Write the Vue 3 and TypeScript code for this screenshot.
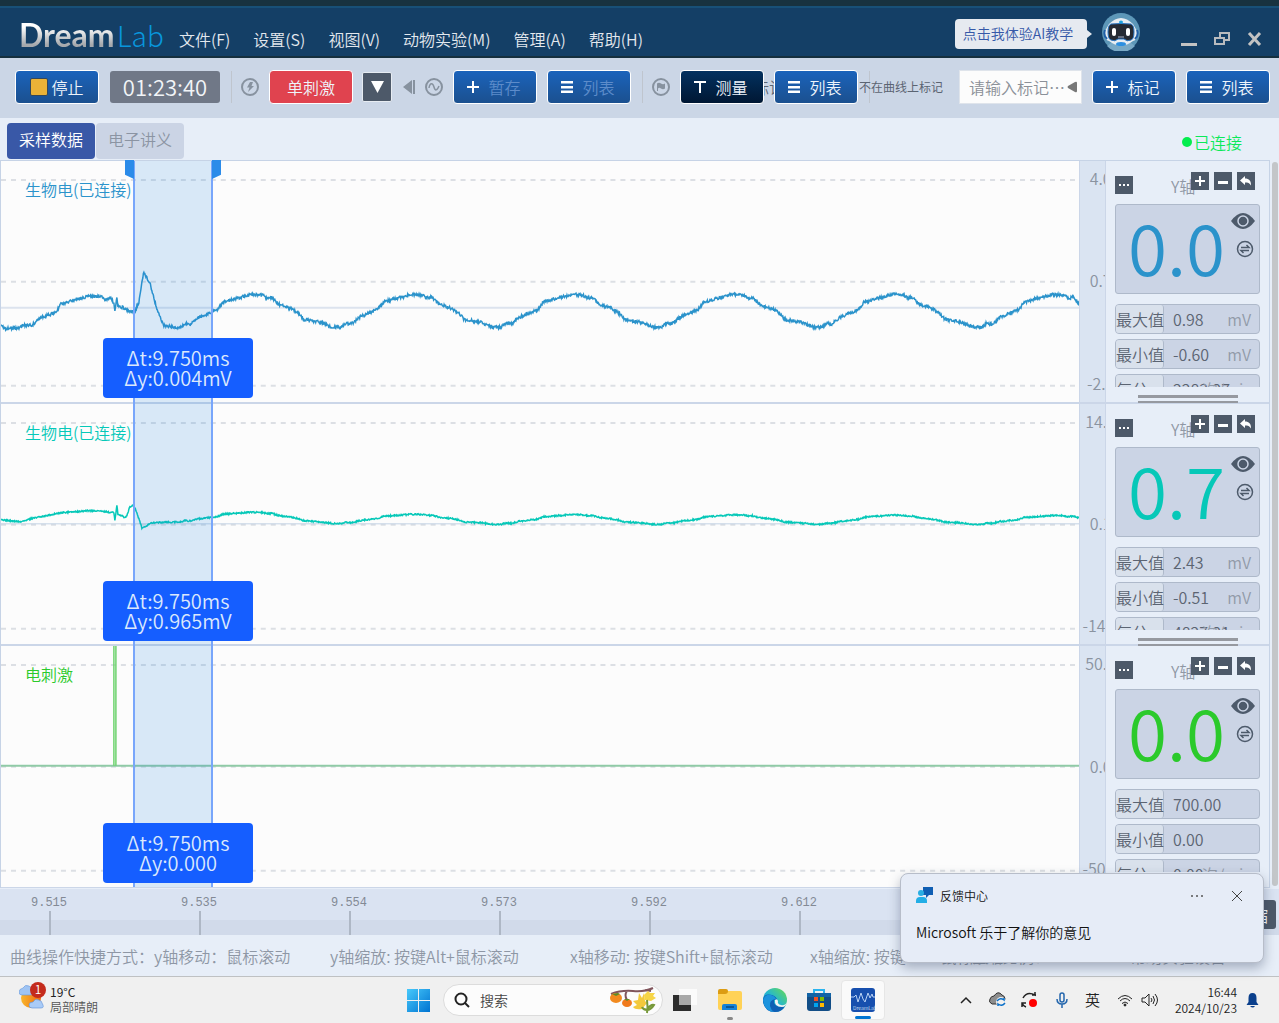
<script setup lang="ts">
type Point = [number, number]

interface Channel {
  id: string
  name: string
  color: string
  ticks: string[]
  zero: number
  path: string
  delta: string[]
  value: string
  stats: { label: string; value: string; unit: string }[]
}

const WIDTH = 1079
const HEIGHT = 241

// Small deterministic generator, so that the signal noise is stable.
function noise(seed: number): () => number {
  let s = seed
  return () => {
    s = (s * 16807) % 2147483647
    return s / 2147483647 - 0.5
  }
}

function interpolate(points: Point[], x: number): number {
  for (let i = 1; i < points.length; i++) {
    const [x0, y0] = points[i - 1]
    const [x1, y1] = points[i]
    if (x <= x1) return y0 + ((y1 - y0) * (x - x0)) / (x1 - x0)
  }
  return points[points.length - 1][1]
}

const onset: Point[] = [
  [0, 165], [4, 167], [18, 167], [23, 164], [31, 164], [38, 157], [55, 151], [60, 143], [75, 138],
  [88, 135], [99, 135], [104, 138], [110, 137], [113, 142], [114, 150], [116, 135], [117, 145],
  [122, 146], [127, 150], [134, 150], [138, 141], [141, 120], [143, 111], [145, 115], [149, 121],
  [153, 137], [157, 151], [163, 164], [172, 166], [181, 166], [184, 162], [190, 163], [198, 156],
]

const cycle: Point[] = [
  [0, 166], [8, 166], [12, 162], [18, 163], [26, 156], [38, 151], [45, 148], [50, 141], [60, 138],
  [68, 136], [79, 133], [90, 134], [94, 137], [99, 136], [106, 143], [118, 147], [126, 152],
  [131, 158], [148, 161], [160, 166],
]

const tealOnset: Point[] = [
  [0, 116], [20, 118], [33, 114], [60, 109], [85, 107], [100, 107], [113, 109], [114, 117],
  [116, 101], [117, 110], [125, 114], [129, 103], [132, 101], [134, 104], [138, 115], [141, 124],
  [144, 123], [150, 119], [180, 118],
]

function bioPath(): string {
  const rand = noise(77)
  let d = ''
  for (let x = 0; x <= WIDTH; x += 0.5) {
    const base = x < 190 ? interpolate(onset, x) : interpolate(cycle, (x - 172) % 160.4)
    d += `${x ? 'L' : 'M'}${x} ${(base + 0.5 + rand() * 3).toFixed(1)}`
  }
  return d
}

function nervePath(): string {
  const rand = noise(31)
  let d = ''
  for (let x = 0; x <= WIDTH; x += 0.5) {
    let base: number
    if (x < 180) {
      base = interpolate(tealOnset, x)
    } else {
      const level = (166 - interpolate(cycle, (x - 172) % 160.4)) / 33
      const low = 118 + Math.min(2.5, (x - 180) / 90)
      base = low - level * (11 - x / 500)
    }
    d += `${x ? 'L' : 'M'}${x} ${(base + rand() * 1.4).toFixed(1)}`
  }
  return d
}

const channels: Channel[] = [
  {
    id: 'a', name: '生物电(已连接)', color: '#2b93cb', ticks: ['4.00', '0.70', '-2.60'],
    zero: 147, path: bioPath(), delta: ['Δt:9.750ms', 'Δy:0.004mV'], value: '0.0',
    stats: [
      { label: '最大值', value: '0.98', unit: 'mV' },
      { label: '最小值', value: '-0.60', unit: 'mV' },
      { label: '每分', value: '2283.27', unit: '次/min' },
    ],
  },
  {
    id: 'b', name: '生物电(已连接)', color: '#06c8b8', ticks: ['14.00', '0.10', '-14.00'],
    zero: 120, path: nervePath(), delta: ['Δt:9.750ms', 'Δy:0.965mV'], value: '0.7',
    stats: [
      { label: '最大值', value: '2.43', unit: 'mV' },
      { label: '最小值', value: '-0.51', unit: 'mV' },
      { label: '每分', value: '4827.21', unit: '次/min' },
    ],
  },
  {
    id: 'c', name: '电刺激', color: '#2bca2b', ticks: ['50.00', '0.00', '-50.00'],
    zero: 120, path: 'M113 120V-2M115 -2V120', delta: ['Δt:9.750ms', 'Δy:0.000'], value: '0.0',
    stats: [
      { label: '最大值', value: '700.00', unit: '' },
      { label: '最小值', value: '0.00', unit: '' },
      { label: '每分', value: '0.00', unit: '次/min' },
    ],
  },
]

const gridLines = [19, 121, 225]
const menus = ['文件(F)', '设置(S)', '视图(V)', '动物实验(M)', '管理(A)', '帮助(H)']
const times = ['9.515', '9.535', '9.554', '9.573', '9.592', '9.612']
</script>

<template>
  <div class="app">
    <header class="titlebar">
      <div class="logo"><span class="dream">Dream</span><span class="lab">Lab</span></div>
      <nav class="menu">
        <a v-for="m in menus" :key="m" href="#">{{ m }}</a>
      </nav>
      <div class="assistant">
        <button class="bubble">点击我体验AI教学</button>
        <svg class="avatar" width="38" height="38" viewBox="0 0 38 38">
          <circle cx="19" cy="19" r="19" fill="#5d97b8" />
          <path d="M5 33a19 19 0 0 0 28 0l-4-3H9z" fill="#79a9c6" />
          <path d="M7 11Q19-1 31 11l4 7q2 8-4 10-12 9-24 0-6-2-4-10z" fill="#e8edf2" />
          <path d="M9 11q10-1 20 0 3 1 3 8 0 7-3 8-4 2-7-1h-6q-3 3-7 1-3-1-3-8 0-7 3-8z" fill="#252a33" stroke="#2a76c4" />
          <path d="M3 17q-2 5 2 9M35 17q2 5-2 9" stroke="#1f5fa8" stroke-width="2" fill="none" />
          <rect x="10" y="15" width="4" height="8" rx="2" fill="#fff" />
          <rect x="24" y="15" width="4" height="8" rx="2" fill="#fff" />
          <path d="M16 24h6" stroke="#697080" stroke-width="2" />
          <ellipse cx="19" cy="9" rx="2" ry="1.5" fill="#1fa3df" />
          <ellipse cx="19" cy="31" rx="5" ry="2" fill="#2d8fe0" />
        </svg>
      </div>
      <div class="window-buttons">
        <button aria-label="最小化"><svg width="16" height="16"><path d="M0 13.500h16" stroke="#c3c3c3" stroke-width="3" /></svg></button>
        <button aria-label="还原">
          <svg width="16" height="16" fill="none" stroke="#b9bbbe" stroke-width="2"><path d="M1 7h9v6H1zM6 7V2h9v7h-5" /></svg>
        </button>
        <button aria-label="关闭">
          <svg width="16" height="16" stroke="#c3c3c3" stroke-width="3"><path d="M2 2l11 12M13 2L2 14" /></svg>
        </button>
      </div>
    </header>

    <div class="toolbar">
      <button class="btn stop"><i class="square"></i>停止</button>
      <output class="timer">01:23:40</output>
      <i class="sep"></i>
      <svg class="round" width="18" height="18" viewBox="0 0 18 18">
        <circle cx="9" cy="9" r="8" fill="none" stroke="#87929f" stroke-width="2" />
        <path d="M9 4h3l-1.500 4H13l-6 6 1.500-4.500H6z" fill="#87929f" />
      </svg>
      <button class="btn red">单刺激</button>
      <button class="drop" aria-label="展开"><svg width="13" height="12"><path d="M0 0h13L6.500 12z" fill="#fff" /></svg></button>
      <svg class="rewind" width="12" height="14"><path d="M9 0v14L0 7zM10 0h2v14h-2z" fill="#87929f" /></svg>
      <svg class="round" width="18" height="18" viewBox="0 0 18 18">
        <circle cx="9" cy="9" r="8" fill="none" stroke="#87929f" stroke-width="2" />
        <path d="M4 10c1-6 4-5 5-1s3 4 5-1" fill="none" stroke="#87929f" stroke-width="1.500" />
      </svg>
      <button class="btn dim">
        <svg width="12" height="12" fill="#fff"><path d="M5 0h2v5h5v2H7v5H5V7H0V5h5z" /></svg>暂存
      </button>
      <button class="btn dim">
        <svg width="12" height="12" fill="#fff"><path d="M0 0h12v2H0zM0 5h12v2H0zM0 10h12v2H0z" /><path d="M0 2h12v1H0zM0 7h12v1H0zM0 9h12v1H0z" opacity=".5" /></svg>列表
      </button>
      <i class="sep"></i>
      <svg class="round" width="18" height="18" viewBox="0 0 18 18">
        <circle cx="9" cy="9" r="8" fill="none" stroke="#87929f" stroke-width="2" />
        <path d="M5 5.500q2-1.500 4 0t4 0v5q-2 1.500-4 0t-3 0V13H5z" fill="#87929f" />
      </svg>
      <button class="btn dark">
        <svg width="12" height="12" fill="#fff"><path d="M0 0h12v2H7v10H5V2H0z" /></svg>测量
      </button>
      <span class="peek">标记</span>
      <button class="btn">
        <svg width="12" height="12" fill="#fff"><path d="M0 0h12v2H0zM0 5h12v2H0zM0 10h12v2H0z" /><path d="M0 2h12v1H0zM0 7h12v1H0zM0 9h12v1H0z" opacity=".5" /></svg>列表
      </button>
      <i class="sep"></i>
      <span class="note">不在曲线上标记</span>
      <div class="marker">
        <div class="combo">
          <input type="text" placeholder="请输入标记…" aria-label="标记" />
          <svg width="10" height="12"><path d="M10 2v8q0 2-2 1L1 7Q0 6 1 5l7-4q2-1 2 1z" fill="#777" /></svg>
        </div>
        <button class="btn">
          <svg width="12" height="12" fill="#fff"><path d="M5 0h2v5h5v2H7v5H5V7H0V5h5z" /></svg>标记
        </button>
        <button class="btn">
          <svg width="12" height="12" fill="#fff"><path d="M0 0h12v2H0zM0 5h12v2H0zM0 10h12v2H0z" /><path d="M0 2h12v1H0zM0 7h12v1H0zM0 9h12v1H0z" opacity=".5" /></svg>列表
        </button>
      </div>
    </div>

    <div class="tabs">
      <button class="tab active">采样数据</button>
      <button class="tab">电子讲义</button>
      <span class="status"><i></i>已连接</span>
    </div>

    <main class="main">
      <div class="channels">
        <section v-for="(c, i) in channels" :key="c.id" class="channel">
          <div class="chart">
            <svg class="plot" :viewBox="`0 0 ${WIDTH} ${HEIGHT}`" preserveAspectRatio="none">
              <line v-for="g in gridLines" :key="g" x1="0" :x2="WIDTH - 4" :y1="g" :y2="g" class="grid" />
              <line x1="0" :x2="WIDTH" :y1="c.zero" :y2="c.zero" :class="i === 0 ? 'zero' : i === 1 ? 'zero strong' : 'zero flat'" />
              <path :d="c.path" fill="none" :stroke="i === 2 ? '#6fd36f' : c.color" stroke-width="1.500" />
            </svg>
            <span class="name" :style="{ color: c.color }">{{ c.name }}</span>
            <div class="band"><template v-if="i === 0"><i class="grip left"></i><i class="grip right"></i></template></div>
            <div class="delta"><span v-for="d in c.delta" :key="d">{{ d }}</span></div>
          </div>
          <div class="scale"><span v-for="t in c.ticks" :key="t">{{ t }}</span></div>
          <aside class="panel">
            <div class="tools">
              <button class="mini more" aria-label="更多"><svg width="10" height="4" fill="#fff"><path d="M0 1h2v2H0zM4 1h2v2H4zM8 1h2v2H8z" /></svg></button>
              <span class="axis-name">Y轴</span>
              <button class="mini" aria-label="放大"><svg width="10" height="10" stroke="#fff" stroke-width="2"><path d="M0 5h10M5 0v10" /></svg></button>
              <button class="mini" aria-label="缩小"><svg width="10" height="10" stroke="#fff" stroke-width="3"><path d="M0 6.500h10" /></svg></button>
              <button class="mini" aria-label="复位"><svg width="12" height="10"><path d="M5 0v2.500c4 0 6 2 6 7C9.500 7 8 6.500 5 6.500V9L0 4.500z" fill="#fff" /></svg></button>
            </div>
            <div class="card">
              <span :style="{ color: c.color }">{{ c.value }}</span>
              <svg class="eye" width="24" height="16" viewBox="0 0 24 16">
                <path d="M0 8Q12-8 24 8 12 24 0 8z" fill="#4d5a6b" />
                <circle cx="12" cy="8" r="5" fill="none" stroke="#cbd4e5" stroke-width="1.500" />
                <circle cx="12" cy="8" r="3.500" fill="#4d5a6b" />
              </svg>
              <svg class="swap" width="18" height="18" viewBox="0 0 18 18" fill="none" stroke="#4d5a6b">
                <circle cx="9" cy="9" r="7.500" stroke-width="1.500" />
                <path d="M5 7.500h8L10.500 5M13 10.500H5L7.500 13" stroke-width="1.500" />
              </svg>
            </div>
            <dl class="stats">
              <div v-for="s in c.stats" :key="s.label"><dt>{{ s.label }}</dt><dd>{{ s.value }}</dd><dd class="unit">{{ s.unit }}</dd></div>
            </dl>
            <i v-if="i < 2" class="resize"></i>
          </aside>
        </section>
      </div>
      <div class="scroll"><i></i></div>
    </main>

    <div class="timeline">
      <div v-for="t in times" :key="t" class="tick">{{ t }}</div>
      <button class="shrink">缩</button>
    </div>

    <footer class="hints">
      <span class="h1">曲线操作快捷方式：y轴移动：鼠标滚动</span>
      <span class="h2">y轴缩放: 按键Alt+鼠标滚动</span>
      <span class="h2">x轴移动: 按键Shift+鼠标滚动</span>
      <span class="h3">x轴缩放: 按键Ctrl+鼠标滚动</span>
      <span class="h3">压缩比例：27:1.000</span>
      <span>帮助实验设备</span>
    </footer>

    <div class="taskbar">
      <div class="weather">
        <svg width="28" height="30" viewBox="0 0 28 30">
          <defs><linearGradient id="sun" x1="0" x2="1"><stop stop-color="#f8b62c" /><stop offset="1" stop-color="#ee6a12" /></linearGradient></defs>
          <circle cx="12" cy="16" r="10" fill="url(#sun)" />
          <path d="M3 13q-3 0-3-3t4-4q2-4 6-2t3 5q2 4-2 4z" fill="#9fc4f3" stroke="#6a9bdc" stroke-width=".6" />
          <path d="M13 26q-3 0-3-3t4-3q2-4 6-2 3 1 3 3 3 5-1 5z" fill="#a9cbf7" stroke="#5d8fd6" stroke-width=".6" />
          <circle cx="19" cy="8" r="8" fill="#c42b1c" />
          <text x="19" y="12" text-anchor="middle" fill="#fff" font-size="12">1</text>
        </svg>
        <div><b>19°C</b><span>局部晴朗</span></div>
      </div>
      <div class="apps">
        <button class="app-btn" aria-label="开始">
          <svg width="23" height="23"><defs><linearGradient id="win" x1="0" y1="0" x2="1" y2="1"><stop stop-color="#47c9fb" /><stop offset="1" stop-color="#0073d1" /></linearGradient></defs>
            <path d="M0 0h11v11H0zM12 0h11v11H12zM0 12h11v11H0zM12 12h11v11H12z" fill="url(#win)" /></svg>
        </button>
        <label class="search">
          <svg width="16" height="16" fill="none" stroke="#222" stroke-width="2"><circle cx="7" cy="7" r="5.500" /><path d="M11 11l4 4" /></svg>
          <input type="text" placeholder="搜索" />
          <svg width="48" height="28" viewBox="0 0 48 28">
            <path d="M2 8Q12 4 24 5T44 2M18 5q-3 4 0 9M36 4l6 1" stroke="#80555c" stroke-width="2" fill="none" />
            <ellipse cx="7" cy="12" rx="6" ry="5" fill="#f28a1e" /><ellipse cx="18" cy="17" rx="5" ry="4" fill="#f17a1c" />
            <path d="M3 8l4 2 4-2-2-1z" fill="#5d8b2a" /><path d="M15 13l3 2 3-2z" fill="#5d8b2a" />
            <path d="M30 7l3 5 2-5 1 8 2 2-5 6q-7 1-9-2l4-2-4-4 5-1z" fill="#f3c93d" />
            <path d="M35 9l4-4 2 2 5 0-2 3 3 2-5 3-6-1z" fill="#f7d548" />
            <path d="M38 14q1 7 0 13M38 23q4-5 7-4-3 5-7 5-4 0-5-3" stroke="#77983a" stroke-width="2" fill="#8fae4b" />
          </svg>
        </label>
        <button class="app-btn" aria-label="任务视图">
          <svg width="24" height="23"><path d="M0 6h18v16H0z" fill="#2c2c2c" /><path d="M6 0h18v16H6z" fill="#fbfbfb" /><path d="M6 6h12v10H6z" fill="#a9a9a9" /></svg>
        </button>
        <button class="app-btn wide open" aria-label="文件资源管理器">
          <svg width="24" height="22"><path d="M0 2h22q2 0 2 2v15q0 2-2 2H2q-2 0-2-2z" fill="#ffd257" /><path d="M0 5V2q0-2 2-2h6q2 0 2 2 0 3-3 3z" fill="#dc9c13" /><path d="M4 21v-4q0-2 2-2h11q2 0 2 2v4z" fill="#1583d8" /><path d="M8 18h8" stroke="#0a5796" stroke-width="2" /></svg>
        </button>
        <button class="app-btn" aria-label="浏览器">
          <svg width="24" height="24" viewBox="0 0 24 24">
            <defs><linearGradient id="e1" x1="0" y1="1" x2="1" y2="0"><stop stop-color="#1a8fdc" /><stop offset=".5" stop-color="#25b8cf" /><stop offset="1" stop-color="#6bdc4c" /></linearGradient></defs>
            <circle cx="12" cy="12" r="12" fill="url(#e1)" />
            <path d="M0 12q1-7 9-5 5 2 5 5H11q-1 6 7 7 3 0 4-1-3 6-10 6Q2 24 0 14z" fill="#0f5fb4" />
            <path d="M0 12q2-6 8-5 4 1 5 4-7 1-6 7 1 4 4 6Q1 23 0 12z" fill="#1c93dd" />
            <path d="M12 12q2-2 3 1-1 3 3 4 4 1 6-3-1 5-5 5-8 0-7-7z" fill="#f2f2f2" />
          </svg>
        </button>
        <button class="app-btn" aria-label="应用商店">
          <svg width="24" height="24"><path d="M7 6V2h10v4" stroke="#2ab4ef" stroke-width="2" fill="none" /><path d="M0 5h24v15q0 3-3 3H3q-3 0-3-3z" fill="#124d86" /><path d="M0 5h24v4H0z" fill="#1263a5" /><path d="M7 9h4v4H7z" fill="#f25022" /><path d="M13 9h4v4h-4z" fill="#7fba00" /><path d="M7 15h4v4H7z" fill="#00a4ef" /><path d="M13 15h4v4h-4z" fill="#ffb900" /></svg>
        </button>
        <button class="app-btn current" aria-label="DreamLab">
          <svg width="24" height="24"><rect width="24" height="24" rx="3" fill="#174fae" /><path d="M0 9h3l2-2 2 7 3-9 2 6 2 3 3-9 2 5 2-4 1 3h2" fill="none" stroke="#b8d1f4" /><text x="2" y="22" font-size="5" fill="#d7e3f6">DreamLab</text></svg>
        </button>
      </div>
      <div class="tray">
        <svg width="12" height="8" fill="none" stroke="#222" stroke-width="1.500"><path d="M1 7l5-5 5 5" /></svg>
        <svg class="cloud" width="17" height="16"><path d="M3 12q-4-2-2-5 1-3 4-3 4-6 8-1 3 1 3 4l-2 5z" fill="#8d8d8d" stroke="#333" /><circle cx="12" cy="10" r="5" fill="#f0f0f0" /><path d="M8 9q3-4 7-1V6M16 11q-3 4-7 1v2" stroke="#0b70c9" stroke-width="1.500" fill="none" /></svg>
        <svg class="sync" width="18" height="18"><path d="M2 7q4-7 12-3V1M1 12q1 3 4 4M1 16v-4h4M11 4h4" stroke="#222" stroke-width="1.500" fill="none" /><circle cx="12" cy="12" r="4" fill="#f00" /></svg>
        <svg class="mic" width="12" height="16" fill="none" stroke="#2366ad" stroke-width="1.500"><rect x="4" y="1" width="4" height="9" rx="2" /><path d="M1 7q0 5 5 5t5-5M6 12v4" /></svg>
        <span class="ime">英</span>
        <svg class="wifi" width="16" height="13" fill="none" stroke="#222"><path d="M1 5q7-7 14 0M3 7q5-5 10 0M5 9.500q3-3 6 0" /><circle cx="8" cy="11" r="1" fill="#222" /></svg>
        <svg width="18" height="14" fill="none" stroke="#222"><path d="M1 5h3l4-4v12L4 9H1zM10 5q2 2 0 4M12 3q3 4 0 8M14 1q5 6 0 12" /></svg>
        <div class="clock"><span>16:44</span><span>2024/10/23</span></div>
        <svg width="13" height="15"><path d="M6.500 0q4 0 4 5v4l2 3H.5l2-3V5q0-5 4-5zM4 13h5q-2 3-5 0z" fill="#0a3f8c" /></svg>
      </div>
    </div>

    <div class="toast" role="status">
      <div class="toast-head">
        <svg width="17" height="17"><path d="M7 0h10v8h-4l-3 3V8H7z" fill="#0f5eb3" /><circle cx="5" cy="6" r="3" fill="#29aee3" /><path d="M0 16v-2q0-4 4-4h3q4 0 4 4v2z" fill="#23aee6" /></svg>
        <span>反馈中心</span>
        <button class="dots" aria-label="选项"><svg width="12" height="4" fill="#555"><circle cx="1" cy="2" r="1" /><circle cx="6" cy="2" r="1" /><circle cx="11" cy="2" r="1" /></svg></button>
        <button aria-label="关闭通知"><svg width="10" height="10" stroke="#444"><path d="M0 0l10 10M10 0L0 10" /></svg></button>
      </div>
      <p>Microsoft 乐于了解你的意见</p>
    </div>
  </div>
</template>

<style>
body {
  margin: 0;
}
</style>

<style scoped>
* {
  box-sizing: border-box;
}
.app {
  position: relative;
  display: flex;
  flex-direction: column;
  min-height: 100vh;
  overflow: hidden;
  background: #e7eef8;
  color: #5b6472;
  font: 350 16px/20px "Noto Sans CJK SC", "Noto Sans", sans-serif;
  white-space: nowrap;
}
button {
  display: flex;
  align-items: center;
  justify-content: center;
  padding: 0;
  border: 0;
  background: none;
  color: inherit;
  font: inherit;
}
input {
  min-width: 0;
  padding: 0;
  border: 0;
  background: none;
  font: inherit;
}
svg {
  display: block;
  flex: none;
}

.titlebar {
  display: flex;
  height: 58px;
  border-top: 6px solid #18323f;
  border-bottom: 2px solid #152f3e;
  box-shadow: inset 0 2px #185077;
  background: #143f66;
}
.logo {
  display: flex;
  align-items: baseline;
  width: 160px;
  margin-left: 19px;
  padding-top: 9px;
  line-height: 40px;
}
.dream {
  width: 98px;
  background: linear-gradient(#fff 30%, #a5a8ac 75%);
  background-clip: text;
  color: transparent;
  font: 700 32px/40px Lato, sans-serif;
}
.lab {
  color: #0896dc;
  font-size: 28px;
  font-weight: 300;
}
.menu {
  display: flex;
  gap: 23px;
  padding-top: 23px;
}
.menu a {
  color: #e3e8ee;
  text-decoration: none;
}
.assistant {
  display: flex;
  gap: 15px;
  margin-left: auto;
  padding-top: 7px;
}
.bubble {
  position: relative;
  width: 132px;
  height: 30px;
  margin-top: 6px;
  padding: 0 6px 2px 0;
  border-radius: 4px;
  background: #e6eaf0;
  color: #3558a8;
  font-size: 14px;
}
.bubble::after {
  content: "";
  position: absolute;
  top: 11px;
  left: 132px;
  border: 4px solid transparent;
  border-left: 5px solid #e6eaf0;
}
.window-buttons {
  display: flex;
  gap: 17px;
  align-items: flex-start;
  padding: 25px 16px 0 41px;
}

.toolbar {
  display: flex;
  align-items: center;
  height: 60px;
  padding: 0 9px 2px 15px;
  background: #cbd6e6;
}
.btn {
  flex: none;
  gap: 9px;
  width: 84px;
  height: 34px;
  padding-right: 2px;
  border: 1px solid #fff;
  border-radius: 4px;
  background: linear-gradient(#1b63bb, #1b508f);
  color: #eef4fb;
}
.btn.stop,
.btn.red {
  gap: 3px;
  padding: 0;
}
.square {
  width: 18px;
  height: 18px;
  border: 1px solid #33475c;
  border-radius: 2px;
  background: #ebb237;
}
.timer {
  width: 110px;
  height: 32px;
  margin-left: 11px;
  border-radius: 3px;
  background: #707887;
  color: #f2f5f8;
  font-size: 22px;
  line-height: 30px;
  text-align: center;
}
.sep {
  flex: none;
  width: 1px;
  height: 32px;
  margin: 0 9px 0 11px;
  background: #bfc5ce;
}
.btn.red {
  margin: 0 9px 0 10px;
  background: #e0434f;
}
.drop {
  width: 30px;
  height: 30px;
  border: 1px solid #e7ecf2;
  border-radius: 2px;
  background: #4d5969;
}
.rewind {
  margin: 0 10px 0 11px;
}
.btn.dim {
  margin-left: 10px;
  color: #5d8cca;
}
.btn.dark {
  margin-left: 10px;
  background: linear-gradient(#03315f, #001733);
}
.peek {
  display: flex;
  justify-content: center;
  width: 10px;
  overflow: hidden;
}
.note {
  margin-left: -20px;
  font-size: 12px;
  font-weight: 400;
}
.marker {
  display: flex;
  gap: 10px;
  align-items: center;
  margin-left: auto;
}
.combo {
  display: flex;
  align-items: center;
  width: 123px;
  height: 34px;
  padding: 0 4px 0 9px;
  border: 1px solid #dfe4eb;
  background: #fcfcfc;
}
.combo input {
  flex: 1;
}
.combo input::placeholder {
  color: #8b9098;
}

.tabs {
  display: flex;
  gap: 1px;
  height: 42px;
  padding: 5px 37px 1px 7px;
}
.tab {
  width: 88px;
  padding-bottom: 4px;
  border-radius: 4px;
  background: #cbd4e5;
  color: #8b94a3;
}
.tab.active {
  background: #3958a7;
  color: #fff;
}
.status {
  display: flex;
  gap: 2px;
  align-items: center;
  margin-left: auto;
  padding-top: 2px;
  color: #0be95a;
}
.status i {
  width: 10px;
  height: 10px;
  border-radius: 50%;
  background: #04ed4e;
}

.main {
  display: flex;
  flex: 1;
}
.channels {
  display: flex;
  flex: 1;
  flex-direction: column;
  border: solid #c6d3e6;
  border-width: 1px 1px 0 1px;
}
.channel {
  display: flex;
  flex: 1;
  min-height: 240px;
  border-bottom: 2px solid #cbd6e8;
}
.channel:last-child {
  border-bottom-width: 1px;
}
.chart {
  position: relative;
  flex: 1;
  background: #fcfcfc;
}
.plot {
  position: absolute;
  width: 100%;
  height: 100%;
}
.grid {
  stroke: #dcdfe4;
  stroke-width: 2;
  stroke-dasharray: 5 5;
}
.zero {
  stroke: #dce3ee;
  stroke-width: 2;
}
.zero.strong {
  stroke: #c3d2e4;
  stroke-width: 1;
}
.zero.flat {
  stroke: #8fcaa6;
}
.name {
  position: absolute;
  top: 18px;
  left: 24px;
}
.band {
  position: absolute;
  top: 0;
  bottom: -2px;
  left: 132px;
  width: 80px;
  border: solid #78a6fb;
  border-width: 0 2px;
  background: rgba(30, 130, 225, 0.16);
}
.channel:last-child .band {
  bottom: 0;
}
.grip {
  position: absolute;
  top: -1px;
  width: 9px;
  height: 19px;
  background: #2b8be9;
}
.grip.left {
  left: -10px;
  clip-path: polygon(0 0, 100% 0, 100% 100%, 0 78%);
}
.grip.right {
  right: -10px;
  clip-path: polygon(0 0, 100% 0, 100% 78%, 0 100%);
}
.delta {
  position: absolute;
  top: 177px;
  left: 102px;
  display: flex;
  flex-direction: column;
  align-items: center;
  width: 150px;
  height: 60px;
  padding-top: 10px;
  border-radius: 4px;
  background: #155eff;
  color: #dbe8fc;
  font-size: 20px;
}
.scale {
  display: flex;
  flex-direction: column;
  justify-content: space-between;
  width: 27px;
  overflow: hidden;
  padding: 7px 0 9px;
  border: solid #cbd6e8;
  border-width: 0 1px;
  background: #dae4f2;
  color: #8a93a0;
}
.scale span {
  width: 50px;
  text-align: center;
}
.panel {
  display: flex;
  flex-direction: column;
  width: 163px;
  padding: 11px 9px 0;
}
.tools {
  display: flex;
  gap: 5px;
  height: 32px;
  padding-right: 5px;
}
.mini {
  position: relative;
  width: 18px;
  height: 18px;
  background: #4d5969;
}
.mini.more {
  margin-top: 4px;
}
.axis-name {
  width: 19px;
  margin: 4px -4px 0 auto;
  color: #8f97a4;
}
.card {
  position: relative;
  height: 90px;
  border: 1px solid #aeb9ca;
  border-radius: 3px;
  background: #cbd4e5;
}
.card > span {
  display: block;
  padding-left: 12px;
  font-size: 71px;
  line-height: 80px;
}
.eye {
  position: absolute;
  top: 8px;
  right: 4px;
}
.swap {
  position: absolute;
  top: 35px;
  right: 5px;
}
.stats {
  height: 83px;
  margin: 10px 0 0;
  overflow: hidden;
}
.stats div {
  display: flex;
  height: 30px;
  margin-bottom: 5px;
  border: 1px solid #aeb9ca;
  border-radius: 4px;
  background: #cbd4e5;
  line-height: 28px;
}
.stats dt {
  flex: none;
  width: 48px;
  border-right: 1px solid #aeb9ca;
  border-radius: 3px;
  background: #d9e1ec;
}
.stats dd {
  flex: none;
  width: 40px;
  margin: 0 0 0 9px;
}
.stats .unit {
  display: flex;
  flex: 1;
  justify-content: flex-end;
  margin: 0 8px 0 0;
  color: #919aa8;
}
.resize {
  position: relative;
  flex: none;
  align-self: center;
  width: 100px;
  height: 8px;
  margin: 8px 0 -2px;
  border: solid #9699a0;
  border-width: 3px 0 2px;
}
.scroll {
  width: 9px;
  padding: 2px 1px 2px 2px;
}
.scroll i {
  display: block;
  height: 100%;
  border-radius: 3px;
  background: #c3c6c9;
}

.timeline {
  display: flex;
  height: 47px;
  border-top: 1px solid #e7eef8;
  background: linear-gradient(#dae3f2 31px, #d1daea 31px);
}
.tick {
  position: relative;
  flex: none;
  width: 150px;
  padding: 5px 0 0 31px;
  color: #838a95;
  font: 400 12px/18px "Liberation Mono", monospace;
}
.tick::after {
  content: "";
  position: absolute;
  bottom: 0;
  left: 49px;
  width: 2px;
  height: 24px;
  background: #aeb7c5;
}
.shrink {
  flex: none;
  width: 24px;
  height: 29px;
  margin: 11px 3px 0 auto;
  padding-right: 8px;
  border-radius: 3px;
  background: #4d5969;
  color: #fff;
}
.hints {
  display: flex;
  height: 41px;
  padding: 11px 0 0 10px;
  overflow: hidden;
  color: #8e97a5;
}
.hints span {
  flex: none;
}
.hints .h1 {
  width: 320px;
}
.hints .h2 {
  width: 240px;
}
.hints .h3 {
  width: 160px;
}

.taskbar {
  display: grid;
  grid-template-columns: 1fr auto 1fr;
  height: 47px;
  border-top: 1px solid #bfc1c3;
  background: #f0f0f0;
  color: #222;
  font-size: 12px;
}
.weather {
  display: flex;
  gap: 3px;
  padding: 5px 0 0 19px;
  line-height: 15px;
}
.weather div {
  display: flex;
  flex-direction: column;
  padding-top: 2px;
}
.weather b {
  font-weight: 400;
}
.weather span {
  color: #555;
}
.apps {
  display: flex;
  align-items: center;
  padding-left: 2px;
}
.app-btn {
  position: relative;
  width: 44px;
  height: 40px;
}
.app-btn.wide {
  width: 46px;
}
.app-btn.current {
  border: 1px solid #e6e6e6;
  border-radius: 4px;
  background: #fafafa;
}
.open::after,
.current::after {
  content: "";
  position: absolute;
  bottom: 0;
  width: 6px;
  height: 3px;
  border-radius: 2px;
  background: #888;
}
.current::after {
  width: 16px;
  background: #0075d2;
}
.search {
  display: flex;
  gap: 10px;
  align-items: center;
  width: 220px;
  height: 32px;
  margin-left: 3px;
  padding: 0 5px 0 10px;
  border: 1px solid #dcdcdc;
  border-radius: 16px;
  background: #fcfcfc;
}
.search input {
  flex: 1;
  font-size: 14px;
}
.search input::placeholder {
  color: #444;
}
.tray {
  display: flex;
  align-items: center;
  justify-content: flex-end;
  padding-right: 20px;
}
.cloud {
  margin-left: 17px;
}
.sync {
  margin: 0 17px 0 15px;
}
.ime {
  margin: 0 17px;
  font-size: 15px;
}
.wifi {
  margin-right: 8px;
}
.clock {
  display: flex;
  flex-direction: column;
  align-items: flex-end;
  width: 64px;
  margin: 0 9px 0 14px;
  line-height: 16px;
}

.toast {
  position: absolute;
  right: 15px;
  bottom: 60px;
  width: 364px;
  height: 90px;
  padding: 13px 21px 0 15px;
  border: 1px solid #b7bdc9;
  border-radius: 8px;
  background: #e6ecf7;
  box-shadow: 0 5px 12px rgba(40, 55, 85, 0.35);
  color: #111;
}
.toast-head {
  display: flex;
  align-items: center;
  height: 17px;
  font-size: 12px;
}
.toast-head span {
  margin-left: 7px;
}
.toast-head .dots {
  margin: 0 29px 0 auto;
}
.toast p {
  margin: 18px 0 0;
  font-size: 14px;
}
</style>
